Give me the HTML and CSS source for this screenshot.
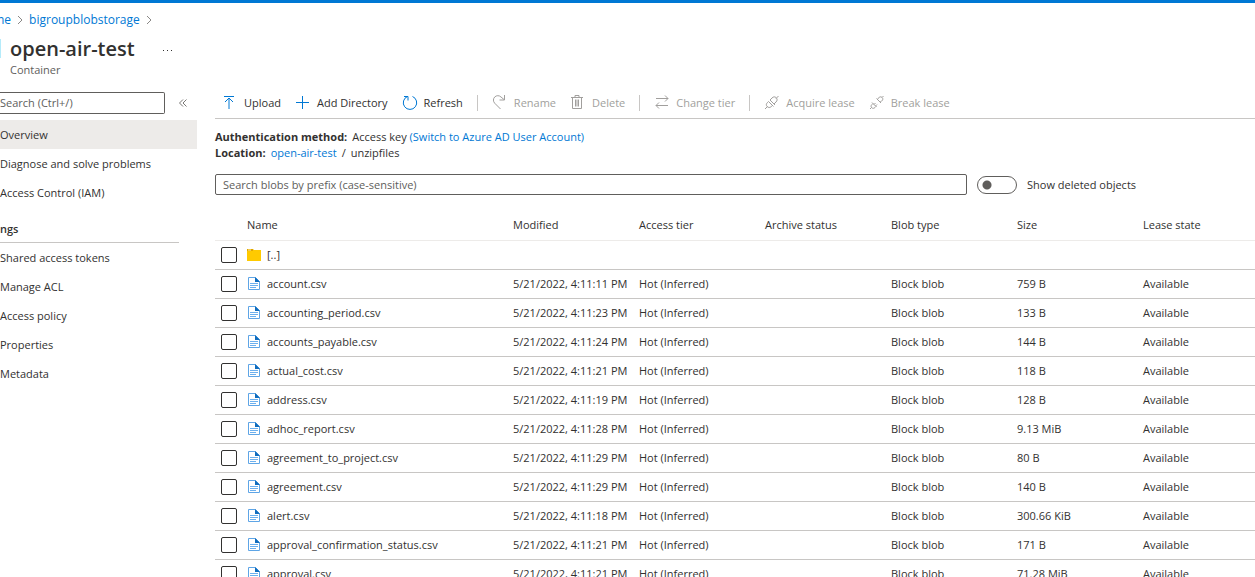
FILE: index.html
```
<!DOCTYPE html>
<html lang="en">
<head>
    <meta charset="UTF-8">
    <meta name="viewport" content="width=device-width, initial-scale=1.0">
    <title>open-air-test - Container</title>
    <link rel="stylesheet" href="styles.css">
</head>
<body>
    <svg class="sprite" aria-hidden="true">
        <symbol id="file" viewBox="0 0 14 16">
            <path d="M1.500 1.500h7l4 4v8h-11z" fill="#fff" stroke="#5ea5e6"/>
            <path d="M8 1l5 5H8z" fill="#0f6cbd"/>
            <path d="M3 7.500h8M3 9.500h8M3 11.500h6" stroke="#6cb0ee"/>
        </symbol>
        <symbol id="folder" viewBox="0 0 14 16">
            <path d="M0 2h6l1 1h7v11H0z" fill="#ffca00"/>
            <path d="M0 2h6v2H0z" fill="#dfa500"/>
            <path d="M1 3h3" stroke="#fff0b0"/>
        </symbol>
    </svg>

    <header class="header">
        <nav class="breadcrumb" aria-label="Breadcrumb">
            <a href="#">ne</a>
            <svg class="chevron" viewBox="0 0 6 10"><path d="M1 1l4 4-4 4"/></svg>
            <a href="#">bigroupblobstorage</a>
            <svg class="chevron" viewBox="0 0 6 10"><path d="M1 1l4 4-4 4"/></svg>
        </nav>
        <div class="title-row">
            <span class="resource-icon"></span>
            <div>
                <h1>open-air-test</h1>
                <p class="subtitle">Container</p>
            </div>
            <button class="more" aria-label="More"><svg viewBox="0 0 12 4"><path d="M1 1h1v1H1zM5 1h1v1H5zM9 1h1v1H9z"/></svg></button>
        </div>
    </header>

    <div class="layout">
        <aside class="sidebar">
            <div class="menu-search">
                <input type="text" placeholder="Search (Ctrl+/)" aria-label="Search menu">
                <button aria-label="Collapse menu"><svg viewBox="0 0 8 8"><path d="M4 .5L.5 4 4 7.500M7.500.5L4 4l3.500 3.500"/></svg></button>
            </div>
            <nav class="menu">
                <a href="#" class="active">Overview</a>
                <a href="#">Diagnose and solve problems</a>
                <a href="#">Access Control (IAM)</a>
                <h2>ngs</h2>
                <a href="#">Shared access tokens</a>
                <a href="#">Manage ACL</a>
                <a href="#">Access policy</a>
                <a href="#">Properties</a>
                <a href="#">Metadata</a>
            </nav>
        </aside>

        <main class="content">
            <div class="toolbar">
                <button><svg viewBox="0 0 16 16"><path d="M2 1.500h10M7 14V3M3 7l4-4 4 4"/></svg>Upload</button>
                <button><svg viewBox="0 0 16 16"><path d="M7.500 1v13M1 7.500h13"/></svg>Add Directory</button>
                <button><svg viewBox="0 0 16 16"><path d="M10.500 1.500A6.700 6.700 0 1 1 5.500 1.500M2 1.500h4v4"/></svg>Refresh</button>
                <span class="separator"></span>
                <button disabled><svg viewBox="0 0 16 16"><path d="M8.500 14L2.700 8.200A4.400 4.400 0 0 1 9 2L12 4.500M12.500 0v5h-5"/></svg>Rename</button>
                <button disabled><svg viewBox="0 0 16 16"><path d="M1 2.500h12M5 2.500v-2h4v2M2.500 2.500v11h9v-11M5.500 4.500v7M7 4.500v7M8.500 4.500v7"/></svg>Delete</button>
                <span class="separator"></span>
                <button disabled><svg viewBox="0 0 16 16"><path d="M2 3.500h12M11 .5l3 3-3 3M14 10.500H2M5 7.500l-3 3 3 3"/></svg>Change tier</button>
                <span class="separator"></span>
                <button disabled><svg viewBox="0 0 16 16"><path d="M1 14l2.500-2.500M12 3.500L14.500 1M6 5l5 5M4.500 6.500l5 5M6 5l2-2c1.500-1.500 3-1.500 4.200-.2s1.300 2.700-.2 4.200l-2 2M4.500 6.500L3.300 7.700c-1.300 1.300-1.300 2.700-.1 3.900s2.700 1.200 4 0l1.300-1.100"/></svg>Acquire lease</button>
                <button disabled><svg viewBox="0 0 16 16"><path d="M1 14l1.500-1.500M13 2.500L14.500 1M7.500 3.500l4.500 4.500M8.500 4.500l1-1.500c1-1.500 2.500-1.500 3.600-.5s1 2.500-.5 3.600L11 7.200M3 7.500L7.500 12M4 8.500L3 9.500c-1.200 1-1.200 2.300-.3 3.200s2.200.8 3.300-.2l1-1M5 9.500L6.500 8M6.500 11L8 9.500"/></svg>Break lease</button>
            </div>

            <div class="info">
                <p><strong>Authentication method:</strong> <span>Access key <a href="#">(Switch to Azure AD User Account)</a></span></p>
                <p><strong>Location:</strong> <a href="#">open-air-test</a> <span>/</span> <span>unzipfiles</span></p>
            </div>

            <div class="filter">
                <input type="text" class="prefix" placeholder="Search blobs by prefix (case-sensitive)" aria-label="Search blobs by prefix">
                <input type="checkbox" role="switch" class="toggle" id="deleted">
                <label for="deleted">Show deleted objects</label>
            </div>

            <table>
                <colgroup>
                    <col class="col-check">
                    <col class="col-name">
                    <col class="col-data">
                    <col class="col-data">
                    <col class="col-data">
                    <col class="col-data">
                    <col class="col-data">
                    <col>
                </colgroup>
                <thead>
                    <tr><th></th><th>Name</th><th>Modified</th><th>Access tier</th><th>Archive status</th><th>Blob type</th><th>Size</th><th>Lease state</th></tr>
                </thead>
                <tbody id="blobs">
                    <tr>
                        <td><input type="checkbox" aria-label="Select parent folder"></td>
                        <td><span class="name"><svg><use href="#folder"/></svg>[..]</span></td>
                        <td></td><td></td><td></td><td></td><td></td><td></td>
                    </tr>
                </tbody>
            </table>
        </main>
    </div>

    <script src="script.js"></script>
</body>
</html>
```
FILE: styles.css
```
* {
    box-sizing: border-box;
}
body {
    margin: 0;
    height: 100vh;
    overflow: hidden;
    border-top: 3px solid #0078d4;
    background-color: white;
    color: #323130;
    font-family: "Segoe UI", "Open Sans", sans-serif;
    font-size: 11px;
    line-height: 16px;
}
h1, h2, p {
    margin: 0;
}
a {
    color: #0078d4;
    text-decoration: none;
}
button {
    padding: 0;
    border: none;
    background: none;
    color: inherit;
    font: inherit;
}
input {
    margin: 0;
    font: inherit;
}
input::placeholder {
    color: #605e5c;
    opacity: 1;
}
svg {
    fill: none;
    flex-shrink: 0;
}
.sprite {
    display: none;
}

/* header */
.header {
    height: 89px;
    padding-top: 9px;
}
.breadcrumb {
    display: flex;
    align-items: center;
    gap: 6px;
    margin-left: -3px;
    font-size: 12px;
}
.chevron {
    width: 6px;
    height: 10px;
    stroke: #8a8886;
}
.title-row {
    display: flex;
    gap: 9px;
    margin-top: 7px;
}
.resource-icon {
    width: 1px;
    height: 19px;
    margin-top: 4px;
    background-color: #b5ebfa;
}
h1 {
    font-size: 20px;
    font-weight: 600;
    line-height: 28px;
}
.subtitle {
    color: #605e5c;
    line-height: 14px;
}
.more {
    height: 28px;
    margin-left: 18px;
}
.more svg {
    width: 12px;
    height: 4px;
    fill: #323130;
}

/* left menu */
.layout {
    display: flex;
}
.sidebar {
    width: 197px;
    flex-shrink: 0;
}
.menu-search {
    display: flex;
    align-items: center;
    gap: 14px;
    margin-bottom: 6px;
}
.menu-search input {
    width: 165px;
    height: 22px;
    padding: 0 0 2px;
    border: 1px solid #605e5c;
    border-left: none;
    border-radius: 0 2px 2px 0;
}
.menu-search svg {
    display: block;
    width: 8px;
    height: 8px;
    stroke: #797775;
}
.menu a {
    display: block;
    color: #323130;
    line-height: 29px;
}
.menu .active {
    background-color: #edebe9;
}
.menu h2 {
    width: 179px;
    margin-top: 10px;
    padding-bottom: 1px;
    border-bottom: 1px solid #c8c6c4;
    font-size: 11px;
    font-weight: 600;
    line-height: 24px;
}

/* main */
.content {
    flex: 1;
    min-width: 0;
    margin-left: 18px;
}
.toolbar {
    display: flex;
    align-items: center;
    gap: 14px;
    height: 27px;
    padding: 0 7px 5px;
    border-bottom: 1px solid #c8c6c4;
    white-space: nowrap;
}
.toolbar button {
    display: flex;
    align-items: center;
    gap: 6px;
}
.toolbar button:disabled {
    color: #a19f9d;
}
.toolbar svg {
    width: 16px;
    height: 16px;
    stroke: #0078d4;
}
.toolbar button:disabled svg {
    stroke: #a19f9d;
}
.separator {
    width: 1px;
    height: 16px;
    background-color: #c8c6c4;
}
.info {
    padding: 10px 0 13px;
}
.info p {
    display: flex;
    gap: 5px;
}
.info strong {
    font-weight: 700;
}
.filter {
    display: flex;
    align-items: center;
    gap: 10px;
}
.prefix {
    flex: 0 1 752px;
    height: 21px;
    padding: 0 7px;
    border: 1px solid #605e5c;
    border-radius: 2px;
}
.toggle {
    appearance: none;
    width: 40px;
    height: 18px;
    border: 1px solid #605e5c;
    border-radius: 9px;
    background: radial-gradient(circle at 9px 8px, #605e5c 4px, transparent 5px);
}

/* blob list */
table {
    width: 100%;
    margin-top: 16px;
    border-collapse: collapse;
    table-layout: fixed;
}
.col-check {
    width: 32px;
}
.col-name {
    width: 266px;
}
.col-data {
    width: 126px;
}
th, td {
    height: 29px;
    padding: 0;
    border-bottom: 1px solid #c8c6c4;
    text-align: left;
    white-space: nowrap;
}
th {
    border-bottom-color: #edebe9;
    font-weight: 500;
}
td input {
    appearance: none;
    display: block;
    width: 16px;
    height: 16px;
    margin-left: 6px;
    border: 1px solid #323130;
    border-radius: 2px;
}
.name {
    display: flex;
    align-items: center;
    gap: 6px;
}
.name svg {
    width: 14px;
    height: 16px;
}
```
FILE: script.js
```
const blobs = [
    ['account.csv', '4:11:11', '759 B'],
    ['accounting_period.csv', '4:11:23', '133 B'],
    ['accounts_payable.csv', '4:11:24', '144 B'],
    ['actual_cost.csv', '4:11:21', '118 B'],
    ['address.csv', '4:11:19', '128 B'],
    ['adhoc_report.csv', '4:11:28', '9.13 MiB'],
    ['agreement_to_project.csv', '4:11:29', '80 B'],
    ['agreement.csv', '4:11:29', '140 B'],
    ['alert.csv', '4:11:18', '300.66 KiB'],
    ['approval_confirmation_status.csv', '4:11:21', '171 B'],
    ['approval.csv', '4:11:21', '71.28 MiB']
];

const rows = blobs.map(([name, time, size]) => `
    <tr>
        <td><input type="checkbox" aria-label="Select ${name}"></td>
        <td><span class="name"><svg><use href="#file"/></svg>${name}</span></td>
        <td>5/21/2022, ${time} PM</td>
        <td>Hot (Inferred)</td>
        <td></td>
        <td>Block blob</td>
        <td>${size}</td>
        <td>Available</td>
    </tr>`);

document.getElementById('blobs').insertAdjacentHTML('beforeend', rows.join(''));
```
